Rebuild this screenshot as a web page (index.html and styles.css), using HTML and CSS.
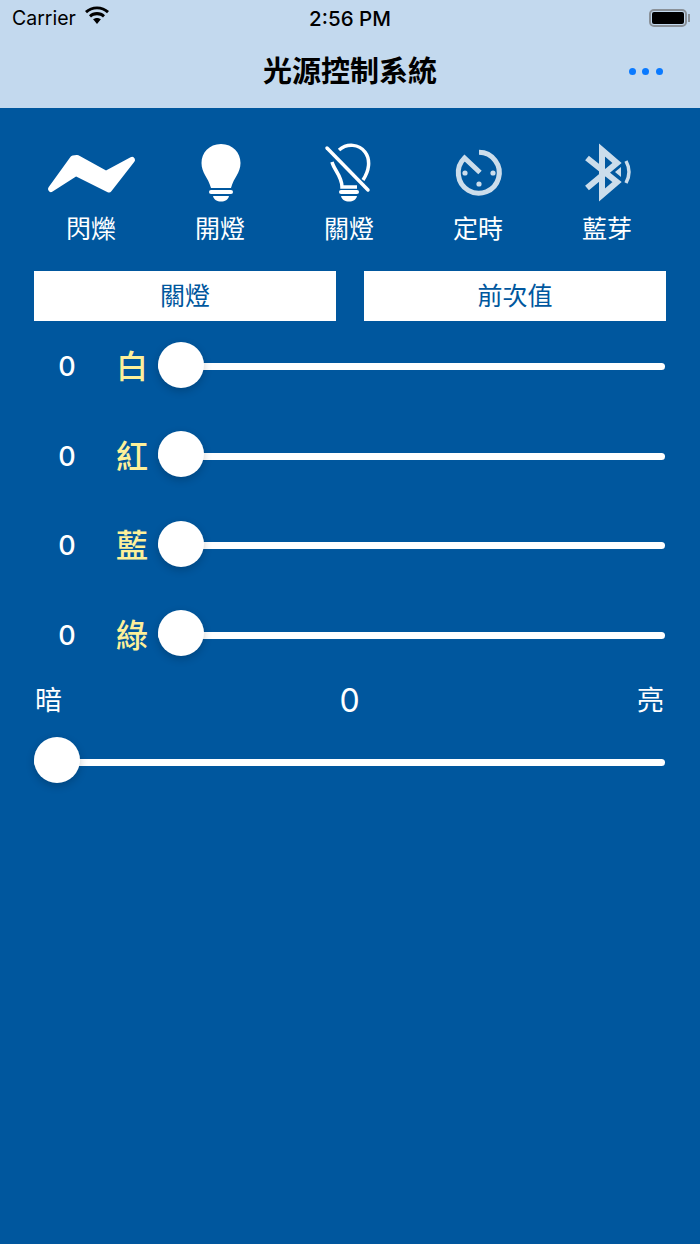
FILE: index.html
```html
<!DOCTYPE html>
<html lang="zh-Hant">
<head>
  <meta charset="UTF-8" />
  <title>光源控制系統</title>
  <link rel="stylesheet" href="styles.css">
</head>
<body>
  <header class="top">
    <div class="status">
      <div class="status-left">
        <span>Carrier</span>
        <svg class="wifi" width="28" height="20" viewBox="0 0 26 19"><path d="M13 3.2c3.700 0 7 1.400 9.500 3.800l1.900-2.200C21.400 2 17.400.4 13 .4S4.600 2 1.600 4.800L3.500 7C6 4.600 9.300 3.200 13 3.200z"/><path d="M13 8.800c2.200 0 4.200.8 5.700 2.200l1.900-2.200C18.600 6.900 15.900 5.800 13 5.800s-5.600 1.100-7.600 3l1.900 2.200c1.500-1.400 3.500-2.200 5.700-2.200z"/><path d="M13 11.300c-1.500 0-2.700.5-3.700 1.400l3.700 4.300 3.700-4.300c-1-.9-2.200-1.400-3.700-1.400z"/></svg>
      </div>
      <span class="clock">2:56 PM</span>
      <div class="battery"><div class="battery-fill"></div></div>
    </div>
    <div class="nav">
      <h1>光源控制系統</h1>
      <div class="more"><i></i><i></i><i></i></div>
    </div>
  </header>

  <main>
    <div class="tools">
      <div class="tool">
        <svg width="92" height="60" viewBox="0 0 92 60"><path d="M6 46 L28 15.500 L32 15 L61 31 L87 17 L64 46.500 L31 30 Z" fill="#fff" stroke="#fff" stroke-width="6" stroke-linejoin="round"/></svg>
        <span>閃爍</span>
      </div>
      <div class="tool">
        <svg width="60" height="60" viewBox="0 0 60 60" fill="#fff"><g transform="translate(1 0)"><path d="M30 1 C18 1 10.500 10 10.500 20 C10.500 30 17 34 20 45 H40 C43 34 49.500 30 49.500 20 C49.500 10 42 1 30 1 Z"/><rect x="18" y="47" width="24" height="4" rx="2"/><path d="M22 53 H38 C37 57 34 58.500 30 58.500 C26 58.500 23 57 22 53 Z"/></g></svg>
        <span>開燈</span>
      </div>
      <div class="tool">
        <svg width="60" height="60" viewBox="0 0 60 60" fill="none" stroke="#fff" stroke-width="3.500"><path d="M20 7 C28 0 40 1 46 9 C52 17 50 28 44 37"/><path d="M13 19 C15 27 23 33 23 44 H38"/><path d="M8 5 L49 47" stroke-linecap="round"/><rect x="20" y="47" width="20" height="4" rx="2" fill="#fff" stroke="none"/><path d="M22 53 H38 C37 57 34 58.500 30 58.500 C26 58.500 23 57 22 53 Z" fill="#fff" stroke="none"/></svg>
        <span>關燈</span>
      </div>
      <div class="tool">
        <svg class="faded" width="60" height="60" viewBox="0 0 60 60" fill="none" stroke="#fff"><path d="M31 9.200 A20.500 20.500 0 1 1 16.500 15 L32 29.500" stroke-width="5"/><circle cx="17" cy="30" r="2.600" fill="#fff" stroke="none"/><circle cx="45" cy="30" r="2.600" fill="#fff" stroke="none"/><circle cx="31" cy="41" r="2.600" fill="#fff" stroke="none"/></svg>
        <span>定時</span>
      </div>
      <div class="tool">
        <svg class="faded" width="60" height="60" viewBox="0 0 60 60" fill="none" stroke="#fff"><path d="M10 15 L40 39 L25 52 V7 L40 20 L10 45" stroke-width="6"/><path d="M49 18 Q55 29 49 40" stroke-width="3.500"/><path d="M44 24 V34 L38 29 Z" fill="#fff" stroke="none"/></svg>
        <span>藍芽</span>
      </div>
    </div>

    <div class="actions">
      <button>關燈</button>
      <button>前次值</button>
    </div>

    <div class="channels">
      <div class="channel">
        <span class="value">0</span><span class="name">白</span>
        <div class="slider"><div class="track"></div><div class="thumb"></div></div>
      </div>
      <div class="channel">
        <span class="value">0</span><span class="name">紅</span>
        <div class="slider"><div class="track"></div><div class="thumb"></div></div>
      </div>
      <div class="channel">
        <span class="value">0</span><span class="name">藍</span>
        <div class="slider"><div class="track"></div><div class="thumb"></div></div>
      </div>
      <div class="channel">
        <span class="value">0</span><span class="name">綠</span>
        <div class="slider"><div class="track"></div><div class="thumb"></div></div>
      </div>
    </div>

    <div class="master">
      <div class="master-head">
        <span>暗</span><span class="master-value">0</span><span>亮</span>
      </div>
      <div class="slider"><div class="track"></div><div class="thumb"></div></div>
    </div>
  </main>
</body>
</html>
```

FILE: styles.css
```css
* {
  box-sizing: border-box;
}

html, body {
  height: 100%;
}

body {
  margin: 0;
  display: flex;
  flex-direction: column;
  background-color: #00579e;
  font-family: "Noto Sans CJK TC", "Noto Sans", sans-serif;
  color: #fff;
}

.top {
  height: 108px;
  background-color: #c3d9ee;
  color: #000;
}

.status {
  height: 36px;
  padding: 0 13px 0 12px;
  display: flex;
  align-items: center;
  justify-content: space-between;
  position: relative;
  font-family: Inter, Roboto, sans-serif;
  font-size: 19.500px;
}

.status-left {
  display: flex;
  align-items: center;
  gap: 7px;
}

.wifi {
  margin-top: -4px;
}

.clock {
  position: absolute;
  left: 0;
  right: 0;
  text-align: center;
  font-weight: 500;
  font-size: 20.500px;
}

.battery {
  width: 38px;
  height: 18px;
  border: 2px solid #8a9198;
  border-radius: 5px;
  padding: 1px;
  position: relative;
}

.battery::after {
  content: "";
  position: absolute;
  right: -5px;
  top: 3px;
  width: 2px;
  height: 8px;
  background-color: #8a9198;
}

.battery-fill {
  height: 100%;
  background-color: #000;
  border-radius: 2px;
}

.nav {
  height: 72px;
  padding-right: 37.500px;
  display: flex;
  align-items: center;
  justify-content: flex-end;
  position: relative;
}

.nav h1 {
  position: absolute;
  left: 0;
  right: 0;
  margin: -6px 0 0;
  text-align: center;
  font-size: 29px;
  font-weight: 700;
}

.more {
  display: flex;
  gap: 6.400px;
  margin-top: -1px;
}

.more i {
  width: 7px;
  height: 7px;
  border-radius: 50%;
  background-color: #0a7aff;
}

main {
  flex: 1;
  padding: 0 34px;
}

.tools {
  margin: 35px 0 0 -7.500px;
  display: grid;
  grid-template-columns: repeat(5, 129px);
}

.tool {
  display: flex;
  flex-direction: column;
  align-items: center;
}

.tool svg {
  display: block;
}

.tool span {
  margin-top: 7px;
  font-size: 25px;
  line-height: 34px;
}

.faded {
  opacity: 0.8;
}

.actions {
  margin-top: 27px;
  display: flex;
  gap: 28px;
}

.actions button {
  flex: 1;
  height: 50px;
  padding: 0 0 4px;
  border: none;
  border-radius: 0;
  background-color: #fff;
  color: #00579e;
  font-family: inherit;
  font-size: 25px;
}

.channels {
  margin-top: -1px;
  display: flex;
  flex-direction: column;
}

.channel {
  height: 89.500px;
  display: flex;
  align-items: center;
}

.value {
  width: 66px;
  padding-top: 4px;
  text-align: center;
  font-family: Inter, Roboto, sans-serif;
  font-size: 27px;
  font-weight: 500;
}

.name {
  width: 64px;
  margin-right: -6px;
  margin-top: -1px;
  text-align: center;
  font-size: 32px;
  font-weight: 500;
  color: #fdf09a;
}

.slider {
  flex: 1;
  height: 46px;
  margin-right: 1px;
  position: relative;
  display: flex;
  align-items: center;
}

.track {
  width: 100%;
  height: 7px;
  margin-top: 4px;
  border-radius: 4px;
  background-color: #fff;
}

.thumb {
  position: absolute;
  left: 0;
  top: 0;
  width: 46px;
  height: 46px;
  border-radius: 50%;
  background-color: #fff;
  box-shadow: 0 3px 8px rgba(0, 0, 0, 0.2);
}

.master {
  margin-top: 1px;
}

.master-head {
  height: 40px;
  display: flex;
  justify-content: space-between;
  align-items: center;
  padding: 0 2px 0 1px;
  font-size: 27px;
  line-height: 40px;
}

.master-value {
  margin-top: 4px;
  font-family: Inter, Roboto, sans-serif;
  font-size: 32px;
  line-height: 36px;
}

.master .slider {
  margin-top: 18px;
}
```
